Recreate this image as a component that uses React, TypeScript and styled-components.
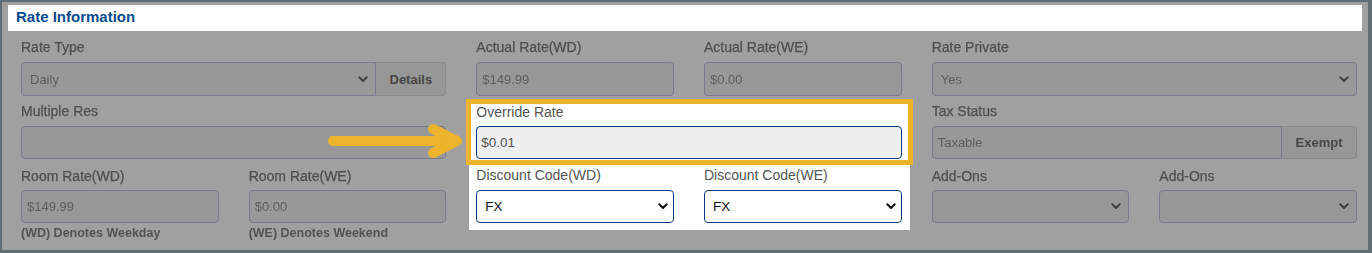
import React from "react";
import styled, { createGlobalStyle } from "styled-components";

const Global = createGlobalStyle`
  html, body { margin: 0; padding: 0; background: #ffffff; }
  * { box-sizing: border-box; }
`;

const FONT = `"Liberation Sans", Arial, Helvetica, sans-serif`;
const YELLOW = "#ecb42a";
const NAVY = "#0b3d7e";

const Frame = styled.div`
  position: relative;
  width: 1372px;
  height: 253px;
  background: #a0a0a0;
  border-style: solid;
  border-color: #5f6d74;
  border-width: 2px 4px 3px 2px;
  font-family: ${FONT};
  overflow: hidden;
`;

const Header = styled.div`
  margin: 3px 6px 0;
  height: 26px;
  background: #ffffff;
  padding-left: 8px;
  font-size: 15px;
  font-weight: 700;
  line-height: 23px;
  color: #0b4b8f;
`;

const FormGrid = styled.div`
  display: grid;
  grid-template-columns: repeat(6, 1fr);
  column-gap: 30px;
  row-gap: 7px;
  padding: 8px 11px 0 19px;
  align-items: start;
`;

const Field = styled.div<{ $col: string; $top?: number }>`
  grid-column: ${(p) => p.$col};
  margin-top: ${(p) => p.$top ?? 0}px;
  display: flex;
  flex-direction: column;
  filter: blur(0.6px);
`;

const Label = styled.div<{ $lit?: boolean; $gap?: number }>`
  font-size: 14px;
  line-height: 16px;
  color: ${(p) => (p.$lit ? "#555555" : "#4f4f4f")};
  -webkit-text-stroke: ${(p) => (p.$lit ? "0" : "0.25px #4f4f4f")};
  margin-bottom: ${(p) => p.$gap ?? 7}px;
  white-space: nowrap;
`;

const DimBox = styled.div<{ $h?: number; $joinRight?: boolean }>`
  height: ${(p) => p.$h ?? 33}px;
  flex: 1 1 auto;
  min-width: 0;
  display: flex;
  align-items: center;
  justify-content: space-between;
  padding: 0 7px 0 8px;
  background: #989898;
  border: 1px solid #777b8a;
  border-radius: ${(p) => (p.$joinRight ? "4px 0 0 4px" : "4px")};
  font-size: 13px;
  color: #5e5e5e;
`;

const DimInput = styled(DimBox)`
  padding-left: 5px;
`;

const Group = styled.div`
  display: flex;
`;

const AddonButton = styled.div<{ $w: number; $h?: number }>`
  width: ${(p) => p.$w}px;
  flex: none;
  height: ${(p) => p.$h ?? 33}px;
  display: flex;
  align-items: center;
  justify-content: center;
  background: #979797;
  border: 1px solid #8a8a8e;
  border-left: none;
  border-radius: 0 4px 4px 0;
  font-size: 13px;
  font-weight: 700;
  color: #464646;
`;

const Note = styled.div`
  margin-top: 3px;
  font-size: 12.5px;
  line-height: 15px;
  font-weight: 700;
  color: #535353;
  white-space: nowrap;
`;

const Spotlight = styled.div`
  grid-column: 3 / 5;
  grid-row: 2 / 4;
  align-self: start;
  margin: -4px -8px 0 -7px;
  padding: 0 8px 7px 7px;
  background: #ffffff;
`;

const YellowBox = styled.div`
  margin: 0 -11px 0 -10px;
  border: 5px solid ${YELLOW};
  padding: 0 6px 1px 5px;
`;

const LitInput = styled.div`
  height: 33px;
  display: flex;
  align-items: center;
  padding: 0 4px;
  background: #eeeeee;
  border: 1px solid ${NAVY};
  border-radius: 4px;
  font-size: 13.5px;
  color: #555555;
`;

const PairGrid = styled.div`
  display: grid;
  grid-template-columns: 1fr 1fr;
  column-gap: 30px;
  margin-top: 2px;
`;

const LitField = styled.div`
  display: flex;
  flex-direction: column;
`;

const LitSelect = styled.div`
  height: 33px;
  display: flex;
  align-items: center;
  justify-content: space-between;
  padding: 0 5px 0 8px;
  background: #ffffff;
  border: 1px solid ${NAVY};
  border-radius: 4px;
  font-size: 13.5px;
  color: #111111;
`;

const Arrow = styled.svg`
  position: absolute;
  left: 318px;
  top: 113px;
`;

const Chevron = ({ color }: { color: string }) => (
  <svg width="10" height="7" viewBox="0 0 10 7">
    <path d="M1.3 1.3 L5 5 L8.7 1.3" fill="none" stroke={color} strokeWidth="2" strokeLinecap="round" strokeLinejoin="round" />
  </svg>
);

const DimSelect = ({ value, h, joinRight }: { value?: string; h?: number; joinRight?: boolean }) => (
  <DimBox $h={h} $joinRight={joinRight}>
    <span>{value ?? ""}</span>
    <Chevron color="#3f3f44" />
  </DimBox>
);

export default function App() {
  return (
    <>
      <Global />
      <Frame>
        <Header>Rate Information</Header>
        <FormGrid>
          <Field $col="1 / 3">
            <Label>Rate Type</Label>
            <Group>
              <DimSelect value="Daily" h={34} joinRight />
              <AddonButton $w={70} $h={34}>Details</AddonButton>
            </Group>
          </Field>
          <Field $col="3 / 4">
            <Label>Actual Rate(WD)</Label>
            <DimInput $h={34}>$149.99</DimInput>
          </Field>
          <Field $col="4 / 5">
            <Label>Actual Rate(WE)</Label>
            <DimInput $h={34}>$0.00</DimInput>
          </Field>
          <Field $col="5 / 7">
            <Label>Rate Private</Label>
            <DimSelect value="Yes" h={34} />
          </Field>

          <Field $col="1 / 3">
            <Label>Multiple Res</Label>
            <DimInput />
          </Field>
          <Spotlight>
            <YellowBox>
              <Label $lit $gap={6}>Override Rate</Label>
              <LitInput>$0.01</LitInput>
            </YellowBox>
            <PairGrid>
              <LitField>
                <Label $lit>Discount Code(WD)</Label>
                <LitSelect>
                  <span>FX</span>
                  <Chevron color="#111111" />
                </LitSelect>
              </LitField>
              <LitField>
                <Label $lit>Discount Code(WE)</Label>
                <LitSelect>
                  <span>FX</span>
                  <Chevron color="#111111" />
                </LitSelect>
              </LitField>
            </PairGrid>
          </Spotlight>
          <Field $col="5 / 7">
            <Label>Tax Status</Label>
            <Group>
              <DimInput $joinRight>Taxable</DimInput>
              <AddonButton $w={75}>Exempt</AddonButton>
            </Group>
          </Field>

          <Field $col="1 / 2" $top={2}>
            <Label $gap={6}>Room Rate(WD)</Label>
            <DimInput>$149.99</DimInput>
            <Note>(WD) Denotes Weekday</Note>
          </Field>
          <Field $col="2 / 3" $top={2}>
            <Label $gap={6}>Room Rate(WE)</Label>
            <DimInput>$0.00</DimInput>
            <Note>(WE) Denotes Weekend</Note>
          </Field>
          <Field $col="5 / 6" $top={2}>
            <Label $gap={6}>Add-Ons</Label>
            <DimSelect />
          </Field>
          <Field $col="6 / 7" $top={2}>
            <Label $gap={6}>Add-Ons</Label>
            <DimSelect />
          </Field>
        </FormGrid>
        <Arrow width="150" height="50" viewBox="0 0 150 50">
          <g fill="none" stroke={YELLOW} strokeWidth="10" strokeLinecap="round" strokeLinejoin="round">
            <path d="M13 26 H134" />
            <path d="M113 14 L137 26 L113 38" />
          </g>
        </Arrow>
      </Frame>
    </>
  );
}
